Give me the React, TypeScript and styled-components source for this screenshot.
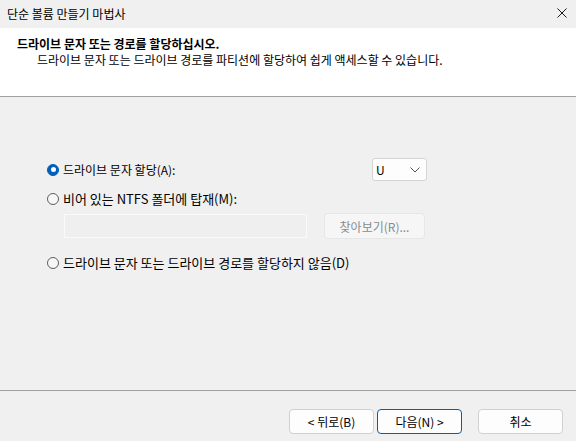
import React from "react";
import styled, { createGlobalStyle } from "styled-components";

const Global = createGlobalStyle`
  html, body { margin: 0; padding: 0; background: #f0f0f0; }
  body { font-family: "Noto Sans CJK KR", "Noto Sans", sans-serif; font-size: 12px; color: #000; }
`;

const Window = styled.div`
  width: 576px;
  height: 441px;
  display: flex;
  flex-direction: column;
  background: #f0f0f0;
  overflow: hidden;
`;

const TitleBar = styled.div`
  height: 28px;
  flex: none;
  display: flex;
  align-items: center;
  justify-content: space-between;
  padding: 0 8px 0 7px;
  background: #f0f0f0;
  font-size: 12px;
  line-height: 16px;
`;

const CloseIcon = styled.svg`
  width: 10px;
  height: 10px;
  margin-right: 1px;
  margin-top: -2px;
`;

const Header = styled.div`
  flex: none;
  background: #fff;
  border-bottom: 1px solid #a0a0a0;
  padding: 8px 0 0 17px;
  box-sizing: border-box;
  height: 69px;
  line-height: 16px;
`;

const HeaderTitle = styled.div`
  font-weight: 700;
  font-size: 12px;
`;

const HeaderSub = styled.div`
  padding-left: 20px;
  font-size: 12px;
`;

const Body = styled.div`
  flex: 1;
  padding: 61px 0 0 47px;
  display: flex;
  flex-direction: column;
  border-bottom: 1px solid #a0a0a0;
`;

const Options = styled.div`
  width: 380px;
  display: flex;
  flex-direction: column;
`;

const Row = styled.div<{ $h: number; $mt?: number }>`
  height: ${(p) => p.$h}px;
  margin-top: ${(p) => p.$mt ?? 0}px;
  display: flex;
  align-items: center;
  justify-content: space-between;
`;

const RadioLabel = styled.label<{ $size?: number }>`
  display: flex;
  align-items: center;
  gap: 4px;
  line-height: 16px;
  font-size: ${(p) => p.$size ?? 12}px;
  white-space: nowrap;
`;

const RadioDot = styled.span<{ $on?: boolean }>`
  width: 12px;
  height: 12px;
  border-radius: 50%;
  box-sizing: border-box;
  flex: none;
  position: relative;
  background: ${(p) => (p.$on ? "#005fb8" : "#f7f7f7")};
  border: 1px solid ${(p) => (p.$on ? "#005fb8" : "#5d5d5d")};
  &::after {
    content: "";
    display: ${(p) => (p.$on ? "block" : "none")};
    position: absolute;
    left: 2.5px;
    top: 2.5px;
    width: 5px;
    height: 5px;
    border-radius: 50%;
    background: #fff;
  }
`;

const Combo = styled.div`
  width: 55px;
  height: 23px;
  box-sizing: border-box;
  background: #fdfdfd;
  border: 1px solid #d4d4d4;
  border-radius: 3px;
  display: flex;
  align-items: center;
  justify-content: space-between;
  padding: 0 6px 0 3px;
  font-size: 12px;
`;

const FolderRow = styled.div`
  margin-top: 6px;
  margin-left: 17px;
  display: flex;
  align-items: center;
  gap: 17px;
`;

const FolderInput = styled.div`
  width: 243px;
  height: 24px;
  box-sizing: border-box;
  border: 1px solid #fafafa;
  background: #efefef;
`;

const BrowseButton = styled.div`
  width: 101px;
  height: 26px;
  box-sizing: border-box;
  border: 1px solid #e6e6e6;
  border-radius: 4px;
  background: #f6f6f6;
  color: #8a8a8a;
  display: flex;
  align-items: center;
  justify-content: center;
  font-size: 12px;
`;

const Footer = styled.div`
  height: 50px;
  flex: none;
  display: flex;
  justify-content: flex-end;
  align-items: flex-start;
  padding: 18px 13px 0 0;
  box-sizing: border-box;
`;

const Button = styled.div<{ $primary?: boolean; $ml?: number }>`
  width: 85px;
  height: 25px;
  box-sizing: border-box;
  margin-left: ${(p) => p.$ml ?? 0}px;
  background: #fdfdfd;
  border: 1px solid ${(p) => (p.$primary ? "#005fb8" : "#d0d0d0")};
  border-radius: 4px;
  display: flex;
  align-items: center;
  justify-content: center;
  font-size: 12px;
  line-height: 16px;
`;

export default function App() {
  return (
    <>
      <Global />
      <Window>
        <TitleBar>
          <span>단순 볼륨 만들기 마법사</span>
          <CloseIcon viewBox="0 0 10 10">
            <path d="M0.5 0.5 L9.5 9.5 M9.5 0.5 L0.5 9.5" stroke="#1a1a1a" strokeWidth="1" fill="none" />
          </CloseIcon>
        </TitleBar>
        <Header>
          <HeaderTitle>드라이브 문자 또는 경로를 할당하십시오.</HeaderTitle>
          <HeaderSub>드라이브 문자 또는 드라이브 경로를 파티션에 할당하여 쉽게 액세스할 수 있습니다.</HeaderSub>
        </Header>
        <Body>
          <Options>
            <Row $h={23}>
              <RadioLabel>
                <RadioDot $on />
                드라이브 문자 할당(A):
              </RadioLabel>
              <Combo>
                <span>U</span>
                <svg width="10" height="6" viewBox="0 0 10 6">
                  <path d="M0.5 0.5 L5 5 L9.5 0.5" stroke="#555" strokeWidth="1" fill="none" />
                </svg>
              </Combo>
            </Row>
            <Row $h={16} $mt={10}>
              <RadioLabel $size={13}>
                <RadioDot />
                비어 있는 NTFS 폴더에 탑재(M):
              </RadioLabel>
            </Row>
            <FolderRow>
              <FolderInput />
              <BrowseButton>찾아보기(R)...</BrowseButton>
            </FolderRow>
            <Row $h={16} $mt={16}>
              <RadioLabel $size={13}>
                <RadioDot />
                드라이브 문자 또는 드라이브 경로를 할당하지 않음(D)
              </RadioLabel>
            </Row>
          </Options>
        </Body>
        <Footer>
          <Button>&lt; 뒤로(B)</Button>
          <Button $primary $ml={3}>다음(N) &gt;</Button>
          <Button $ml={16}>취소</Button>
        </Footer>
      </Window>
    </>
  );
}
